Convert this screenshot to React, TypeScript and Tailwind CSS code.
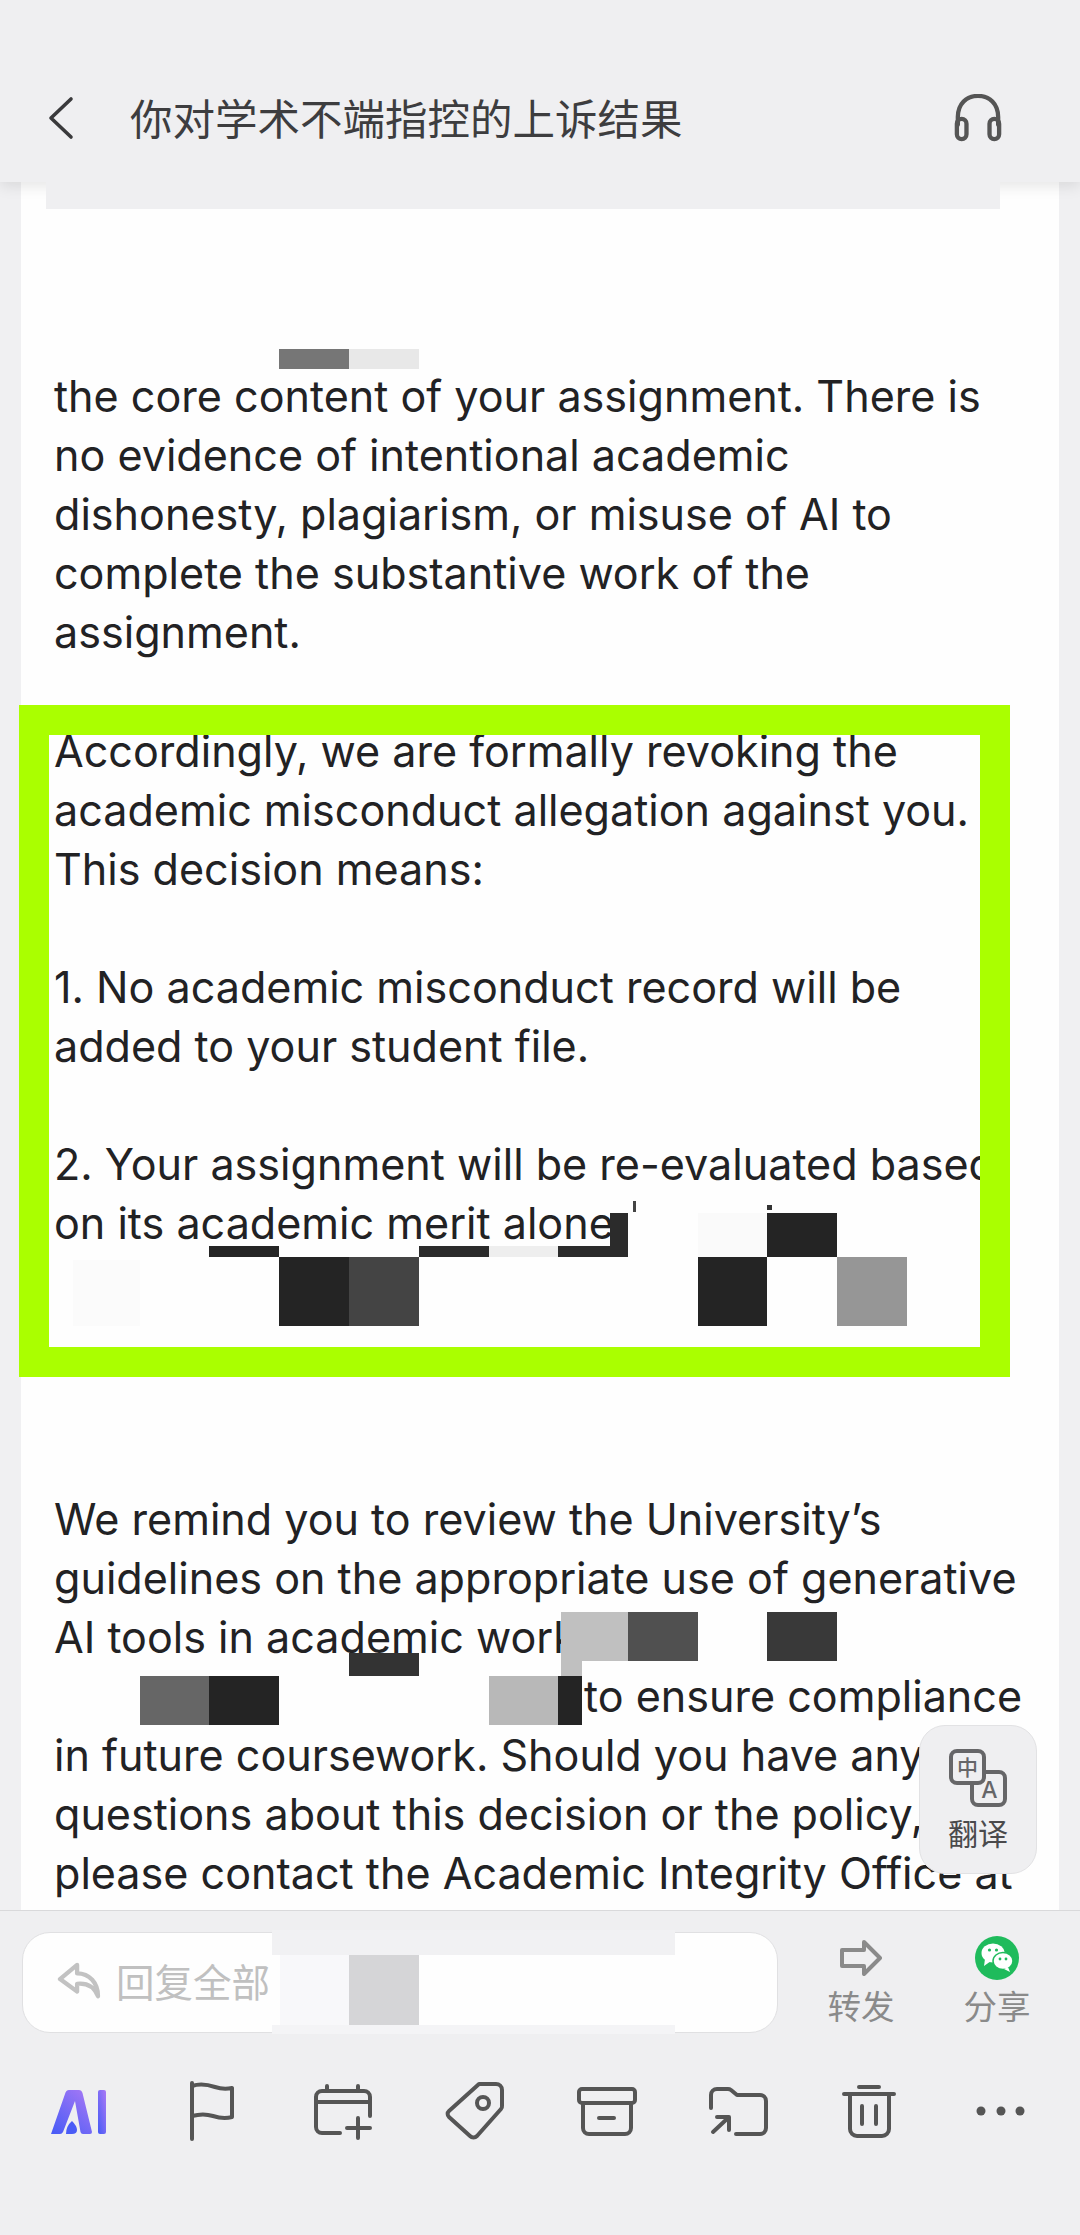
const bodyFont = "font-['Inter','Noto_Sans_CJK_SC',sans-serif]";
const cjkFont = "font-['Noto_Sans_CJK_SC','Noto_Sans',sans-serif]";

const tiles = [
  // faint square and first censored row
  'left-[73px] top-[1260px] w-[67px] h-[66px] bg-[#fbfbfb]',
  'left-[209px] top-[1246px] w-[70px] h-[11px] bg-[#252525]',
  'left-[279px] top-[1257px] w-[70px] h-[69px] bg-[#242424]',
  'left-[349px] top-[1257px] w-[70px] h-[69px] bg-[#444444]',
  'left-[419px] top-[1246px] w-[70px] h-[11px] bg-[#2b2b2b]',
  'left-[489px] top-[1246px] w-[69px] h-[11px] bg-[#eeeeee]',
  'left-[558px] top-[1246px] w-[70px] h-[11px] bg-[#2b2b2b]',
  'left-[610px] top-[1213px] w-[18px] h-[44px] bg-[#2b2b2b]',
  'left-[698px] top-[1213px] w-[69px] h-[44px] bg-[#fafafa]',
  'left-[767px] top-[1213px] w-[70px] h-[44px] bg-[#242424]',
  'left-[698px] top-[1257px] w-[69px] h-[69px] bg-[#242424]',
  'left-[837px] top-[1257px] w-[70px] h-[69px] bg-[#969696]',
  // bits of letters left above the redaction
  'left-[633px] top-[1201px] w-[3px] h-[11px] bg-[#444444]',
  'left-[767px] top-[1205px] w-[5px] h-[5px] bg-[#333333]',
  // second censored block
  'left-[561px] top-[1612px] w-[67px] h-[49px] bg-[#c0c0c0]',
  'left-[628px] top-[1612px] w-[70px] h-[49px] bg-[#505050]',
  'left-[767px] top-[1612px] w-[70px] h-[49px] bg-[#393939]',
  'left-[349px] top-[1653px] w-[70px] h-[23px] bg-[#333333]',
  'left-[140px] top-[1676px] w-[69px] h-[49px] bg-[#666666]',
  'left-[209px] top-[1676px] w-[70px] h-[49px] bg-[#242424]',
  'left-[489px] top-[1676px] w-[69px] h-[49px] bg-[#b8b8b8]',
  'left-[558px] top-[1676px] w-[24px] h-[49px] bg-[#242424]',
  'left-[561px] top-[1661px] w-[21px] h-[15px] bg-[#c0c0c0]',
  // over the reply box
  'left-[272px] top-[1930px] w-[403px] h-[25px] bg-[#f1f1f3]',
  'left-[272px] top-[2025px] w-[403px] h-[9px] bg-[#f4f4f6]',
  'left-[280px] top-[1955px] w-[69px] h-[70px] bg-[#f8f8fa]',
  'left-[349px] top-[1955px] w-[70px] h-[70px] bg-[#d5d5d7]',
  // small tiles near the header
  'left-[279px] top-[349px] w-[70px] h-[20px] bg-[#767676]',
  'left-[349px] top-[349px] w-[70px] h-[20px] bg-[#e8e8e8]',
];

function Line({ children }: { children?: string }) {
  return <div className="h-[59.1px] whitespace-nowrap">{children}</div>;
}

function ToolIcon({ children }: { children: React.ReactNode }) {
  return (
    <button className="flex justify-center">
      <svg width="64" height="64" viewBox="0 0 64 64" fill="none" stroke="#555555" strokeWidth="4" strokeLinecap="round" strokeLinejoin="round">
        {children}
      </svg>
    </button>
  );
}

export default function App() {
  return (
    <div className={`relative w-[1080px] h-[2235px] overflow-hidden flex flex-col bg-[#f0f0f2] ${bodyFont}`}>
      <header className="relative z-10 h-[182px] shrink-0 pt-[54px] bg-[#efeff1] shadow-[0_4px_14px_rgba(0,0,0,0.10)]">
        <div className="h-[128px] flex items-center pl-[47px] pr-[78px]">
          <svg width="28" height="44" viewBox="0 0 28 44" fill="none" stroke="#3a3a3c" strokeWidth="3.6" strokeLinecap="round" strokeLinejoin="round">
            <path d="M24 3 L4 22 L24 41" />
          </svg>
          <h1 className={`ml-[55px] -mt-[2px] text-[42.5px] leading-none text-[#3d3d3f] whitespace-nowrap ${cjkFont}`}>你对学术不端指控的上诉结果</h1>
          <svg className="ml-auto" width="48" height="48" viewBox="0 0 50 50" fill="none" stroke="#555555" strokeWidth="4.5" strokeLinecap="round">
            <path d="M4 32 V24 C4 10 13 2 25 2 C37 2 46 10 46 24 V32" />
            <rect x="3" y="26" width="10" height="21" rx="5" />
            <rect x="37" y="26" width="10" height="21" rx="5" />
          </svg>
        </div>
      </header>

      <main className="flex-1 min-h-0 mx-[21px] bg-[#fefefe] overflow-hidden">
        <div className="relative z-20 mx-[25px] w-[954px] h-[27px] bg-[#efeff1]" />
        <div className="pt-[158px] pl-[33px] text-[43.1px] leading-[59.1px] text-[#222224]">
          <Line>the core content of your assignment. There is</Line>
          <Line>no evidence of intentional academic</Line>
          <Line>dishonesty, plagiarism, or misuse of AI to</Line>
          <Line>complete the substantive work of the</Line>
          <Line>assignment.</Line>
          <Line />
          <Line>Accordingly, we are formally revoking the</Line>
          <Line>academic misconduct allegation against you.</Line>
          <Line>This decision means:</Line>
          <Line />
          <Line>1. No academic misconduct record will be</Line>
          <Line>added to your student file.</Line>
          <Line />
          <Line>2. Your assignment will be re-evaluated based</Line>
          <Line>on its academic merit alone</Line>
          <Line />
          <Line />
          <Line />
          <Line />
          <Line>We remind you to review the University’s</Line>
          <Line>guidelines on the appropriate use of generative</Line>
          <Line>AI tools in academic work</Line>
          <div className="h-[59.1px] whitespace-nowrap pl-[530px]">to ensure compliance</div>
          <Line>in future coursework. Should you have any</Line>
          <Line>questions about this decision or the policy,</Line>
          <Line>please contact the Academic Integrity Office at</Line>
        </div>
      </main>

      <footer className="relative h-[325px] shrink-0 border-t border-[#d9d9db] bg-[#efeff1]">
        <div className="flex pt-[21px] pl-[22px]">
          <div className="w-[756px] h-[101px] rounded-[28px] border border-[#e0e0e2] bg-[#fefefe] flex items-center pl-[34px]">
            <svg className="-mt-[4px]" width="44" height="38" viewBox="0 0 46 40" fill="none" stroke="#c2c2c2" strokeWidth="4.5" strokeLinejoin="round" strokeLinecap="round">
              <path d="M21 3 L3 18 L21 31 V23 C31 22 39 26 43 36 C43 22 34 12 21 12 Z" />
            </svg>
            <span className={`ml-[15px] -mt-[4px] text-[38.5px] leading-none text-[#c0c0c0] whitespace-nowrap ${cjkFont}`}>回复全部</span>
          </div>
          <div className="ml-[50px] w-[66px] flex flex-col items-center">
            <svg className="mt-[8px]" width="42" height="36" viewBox="0 0 42 36" fill="none" stroke="#8a8a8a" strokeWidth="4" strokeLinejoin="round">
              <path d="M2 10 H24 V2 L40 18 L24 34 V26 H2 Z" />
            </svg>
            <span className={`mt-[7px] text-[33.5px] leading-[44px] text-[#8a8a8a] whitespace-nowrap ${cjkFont}`}>转发</span>
          </div>
          <div className="ml-[70px] w-[66px] flex flex-col items-center">
            <svg className="mt-[4px]" width="44" height="44" viewBox="0 0 44 44">
              <circle cx="22" cy="22" r="22" fill="#1fbb5c" />
              <ellipse cx="18" cy="17" rx="11.5" ry="9.5" fill="#ffffff" />
              <path d="M10 23 L9 30 L16 25 Z" fill="#ffffff" />
              <ellipse cx="28" cy="25" rx="10" ry="8.5" fill="#ffffff" stroke="#1fbb5c" strokeWidth="1.5" />
              <path d="M33 31 L35 36 L29 33 Z" fill="#ffffff" />
              <circle cx="14.5" cy="14" r="1.6" fill="#1fbb5c" />
              <circle cx="21.5" cy="14" r="1.6" fill="#1fbb5c" />
              <circle cx="25" cy="23" r="1.4" fill="#1fbb5c" />
              <circle cx="31" cy="23" r="1.4" fill="#1fbb5c" />
            </svg>
            <span className={`mt-[3px] text-[33.5px] leading-[44px] text-[#8a8a8a] whitespace-nowrap ${cjkFont}`}>分享</span>
          </div>
        </div>

        <div className="mt-[46px] px-[13px] grid grid-cols-8">
          {/* AI */}
          <button className="flex justify-center">
            <svg width="64" height="64" viewBox="0 0 64 64">
              <defs>
                <linearGradient id="ai" x1="0.9" y1="0" x2="0.1" y2="1">
                  <stop offset="0" stopColor="#a678f5" />
                  <stop offset="1" stopColor="#4a5cf6" />
                </linearGradient>
              </defs>
              <path d="M22 11 H32 Q34.5 11 35.5 14 L45 53 Q45 55 43 55 H36 Q34 55 33.5 53 L28 22 L16 53 Q15 55 13 55 H4 L18 15 Q19 11 22 11 Z" fill="url(#ai)" />
              <path d="M25 42 Q30 47 30 51 Q30 55 25 55 H19 Q19 47 25 42 Z" fill="#4a5cf6" />
              <rect x="51" y="11" width="8" height="44" rx="2" fill="url(#ai)" />
            </svg>
          </button>
          {/* flag */}
          <ToolIcon>
            <path d="M13 4 V60" />
            <path d="M13 7 C22 4 30 6 36 8 C42 10 48 10 53 9 V38 C46 40 40 39 34 37 C28 35 20 35 13 37" />
          </ToolIcon>
          {/* calendar */}
          <ToolIcon>
            <path d="M30 54 H12 a6 6 0 0 1 -6 -6 V18 a6 6 0 0 1 6 -6 H54 a6 6 0 0 1 6 6 V37" />
            <path d="M6 23 H60 M17 7 V12 M48 7 V12 M48 39 V59 M37 49 H60" />
          </ToolIcon>
          {/* tag */}
          <ToolIcon>
            <path d="M37 5 H54 a6 6 0 0 1 6 6 V27 a4 4 0 0 1 -1 3 L35 57 a5 5 0 0 1 -7 0 L7 38 a4 4 0 0 1 0 -6 Z" />
            <circle cx="41" cy="24" r="6" />
          </ToolIcon>
          {/* archive */}
          <ToolIcon>
            <rect x="5" y="10" width="56" height="14" rx="3" />
            <path d="M9 24 V49 a6 6 0 0 0 6 6 H51 a6 6 0 0 0 6 -6 V24" />
            <path d="M25 39 H40" />
          </ToolIcon>
          {/* move to folder */}
          <ToolIcon>
            <path d="M5 29 V16 a6 6 0 0 1 6 -6 H22 a5 5 0 0 1 3 1 L31 16 H54 a6 6 0 0 1 6 6 V49 a6 6 0 0 1 -6 6 H30" />
            <path d="M7 53 L22 39 M11 38 H23 V51" />
          </ToolIcon>
          {/* trash */}
          <ToolIcon>
            <path d="M22 8 H42 M7 15 H57" />
            <path d="M13 15 V50 a7 7 0 0 0 7 7 H45 a7 7 0 0 0 7 -7 V15" />
            <path d="M25 27 V45 M39 27 V45" />
          </ToolIcon>
          {/* more */}
          <button className="flex justify-center">
            <svg width="64" height="64" viewBox="0 0 64 64" fill="#555555">
              <circle cx="12" cy="32" r="4.5" />
              <circle cx="32" cy="32" r="4.5" />
              <circle cx="51" cy="32" r="4.5" />
            </svg>
          </button>
        </div>
      </footer>

      {/* highlight frame drawn on the screenshot */}
      <div className="absolute left-[19px] top-[705px] w-[991px] h-[672px] border-[30px] border-[#aaff00]" />

      {/* pixelated redactions */}
      {tiles.map((t) => (
        <div key={t} className={`absolute ${t}`} />
      ))}

      {/* floating translate button */}
      <div className="absolute left-[919px] top-[1725px] w-[118px] h-[149px] rounded-[26px] border border-[#e2e2e4] bg-[#efeff1] flex flex-col items-center">
        <svg className="mt-[22px]" width="60" height="60" viewBox="0 0 60 60" fill="none" stroke="#666668" strokeWidth="4">
          <rect x="24" y="24" width="33" height="33" rx="6" />
          <text x="41.5" y="50" textAnchor="middle" fontSize="23" fontWeight="500" fill="#666668" stroke="none" fontFamily="Inter">A</text>
          <rect x="3" y="3" width="33" height="32" rx="6" fill="#efeff1" />
          <text x="19.5" y="26.5" textAnchor="middle" fontSize="21" fontWeight="500" fill="#666668" stroke="none" fontFamily="Noto Sans CJK SC">中</text>
        </svg>
        <span className={`mt-[5px] text-[30px] leading-[38px] text-[#4a4a4c] whitespace-nowrap ${cjkFont}`}>翻译</span>
      </div>
    </div>
  );
}
